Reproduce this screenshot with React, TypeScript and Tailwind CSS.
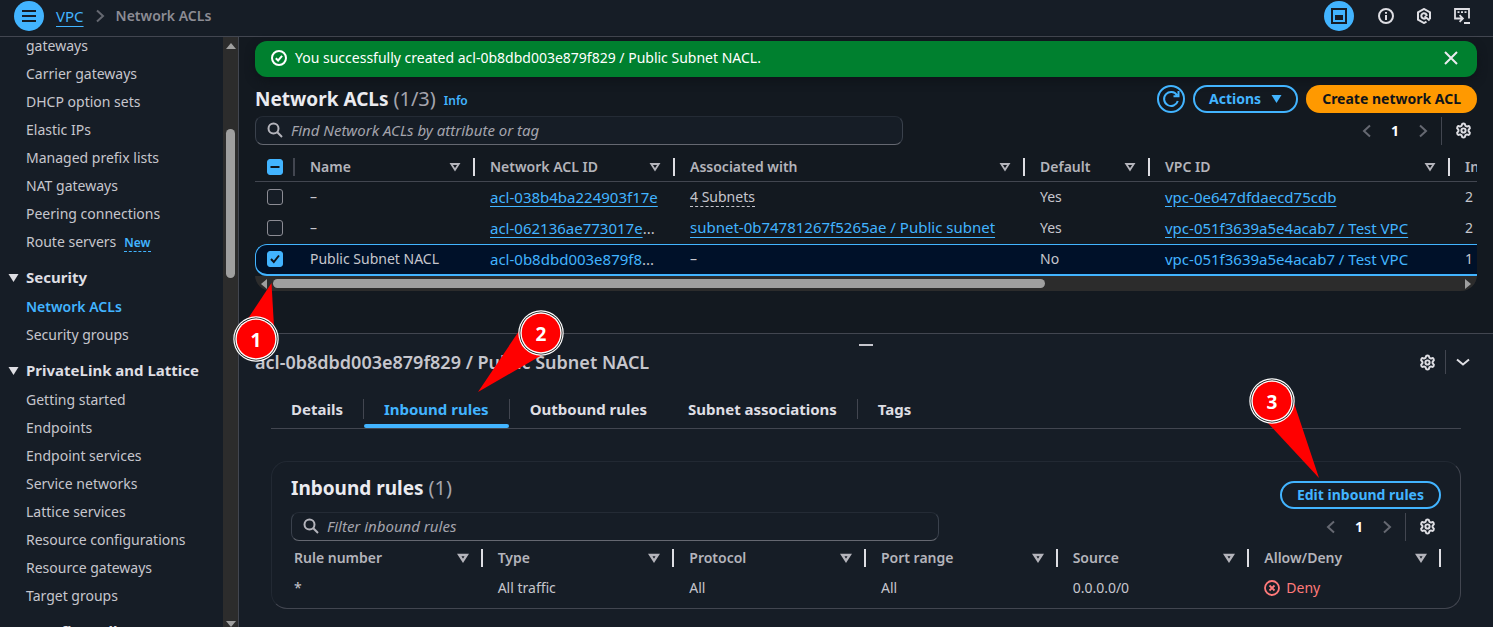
import type { ReactNode } from "react";
import { Settings } from "lucide-react";

type NavGroup = { title?: string; items: string[] };

const navGroups: NavGroup[] = [
  {
    items: [
      "gateways",
      "Carrier gateways",
      "DHCP option sets",
      "Elastic IPs",
      "Managed prefix lists",
      "NAT gateways",
      "Peering connections",
      "Route servers",
    ],
  },
  { title: "Security", items: ["Network ACLs", "Security groups"] },
  {
    title: "PrivateLink and Lattice",
    items: [
      "Getting started",
      "Endpoints",
      "Endpoint services",
      "Service networks",
      "Lattice services",
      "Resource configurations",
      "Resource gateways",
      "Target groups",
    ],
  },
  { title: "DNS firewall", items: [] },
];

const acls = [
  { name: "–", id: "acl-038b4ba224903f17e", cut: false, assoc: "4 Subnets", kind: "popover", def: "Yes", vpc: "vpc-0e647dfdaecd75cdb", count: "2", selected: false },
  { name: "–", id: "acl-062136ae773017e", cut: true, assoc: "subnet-0b74781267f5265ae / Public subnet", kind: "link", def: "Yes", vpc: "vpc-051f3639a5e4acab7 / Test VPC", count: "2", selected: false },
  { name: "Public Subnet NACL", id: "acl-0b8dbd003e879f8", cut: true, assoc: "–", kind: "plain", def: "No", vpc: "vpc-051f3639a5e4acab7 / Test VPC", count: "1", selected: true },
];

function Chevron({ d, className }: { d: string; className: string }) {
  return (
    <svg viewBox="0 0 16 16" className={`size-4 ${className}`} fill="none" stroke="currentColor" strokeWidth="2" aria-hidden="true">
      <path d={d} />
    </svg>
  );
}

const LEFT = "M11 2.5 5 8l6 5.5";
const RIGHT = "m5 2.5 6 5.5-6 5.5";

function Gear({ label }: { label: string }) {
  return (
    <button aria-label={label} className="flex text-[#dedee3]">
      <Settings size={17} strokeWidth={2.8} />
    </button>
  );
}

function Pager() {
  return (
    <div className="flex items-center pr-[5px]">
      <button aria-label="Previous page" className="flex">
        <Chevron d={LEFT} className="text-[#656871]" />
      </button>
      <button className="w-10 text-center font-bold text-white">1</button>
      <button aria-label="Next page" className="flex">
        <Chevron d={RIGHT} className="text-[#656871]" />
      </button>
      <span className="mr-[13px] ml-2.5 h-7 w-px bg-[#424650]" />
      <Gear label="Preferences" />
    </div>
  );
}

function Search({ placeholder }: { placeholder: string }) {
  return (
    <label className="flex h-[29px] w-[648px] items-center gap-2 rounded-lg border border-[#3a414c] border-t-[#242b35] border-b-[#656871] bg-[#161d26] px-[11px] pb-0.5">
      <svg viewBox="0 0 16 16" className="size-4 shrink-0 text-[#b4b4bb]" fill="none" stroke="currentColor" strokeWidth="2" aria-hidden="true">
        <circle cx="6.5" cy="6.5" r="5" />
        <path d="m10.3 10.3 4.7 4.7" />
      </svg>
      <input
        type="text"
        aria-label={placeholder}
        placeholder={placeholder}
        className="min-w-0 flex-1 bg-transparent text-[15px] italic outline-none placeholder:text-[#a4a4ad]"
      />
    </label>
  );
}

function HeadCell({ children, first, filled }: { children: ReactNode; first?: boolean; filled?: boolean }) {
  return (
    <th className="p-0 text-left font-semibold text-[#b4b4bb]">
      <div className={`flex items-center justify-between ${first ? "pl-[3px]" : "pl-[15px]"}`}>
        {children}
        <span className="flex items-center gap-3">
          <svg viewBox="0 0 12 12" className="size-3" fill="none" stroke="currentColor" strokeWidth={filled ? "2.4" : "1.8"} aria-hidden="true">
            <path d="M2.2 3h7.6L6 8.8Z" />
          </svg>
          <span className="h-[18px] w-0.5 bg-[#dedee3]" />
        </span>
      </div>
    </th>
  );
}

function Check({ checked, mixed, label }: { checked?: boolean; mixed?: boolean; label: string }) {
  const on = checked || mixed;
  return (
    <label className={`grid size-4 place-items-center ${checked ? "ml-[11px]" : "ml-3"}`}>
      <input
        type="checkbox"
        aria-label={label}
        defaultChecked={on}
        className={`col-start-1 row-start-1 size-4 appearance-none rounded-[3px] border ${on ? "border-[#42b4ff] bg-[#42b4ff]" : "border-[#8c8c94] bg-[#161d26]"}`}
      />
      {on && (
        <svg viewBox="0 0 16 16" className="pointer-events-none col-start-1 row-start-1 size-4" fill="none" stroke="#0f141a" strokeWidth="2" aria-hidden="true">
          <path d={mixed ? "M3.5 8h9" : "m4 8 2.8 3L12 4.5"} />
        </svg>
      )}
    </label>
  );
}

function Callout({ n, className, points, cx, cy, w, h }: { n: string; className: string; points: string; cx: number; cy: number; w: number; h: number }) {
  return (
    <svg width={w} height={h} viewBox={`0 0 ${w} ${h}`} className={`pointer-events-none absolute ${className}`} role="img" aria-label={`Step ${n}`}>
      <polygon points={points} fill="#ff0000" />
      <circle cx={cx} cy={cy} r="22.7" fill="#ffffff" />
      <circle cx={cx} cy={cy} r="21.5" fill="#111111" />
      <circle cx={cx} cy={cy} r="20.7" fill="#ffffff" />
      <circle cx={cx} cy={cy} r="19.3" fill="#ff0000" />
      <text x={cx} y={cy + 8} textAnchor="middle" fill="#ffffff" fontSize="19" fontWeight="700" fontFamily="'Open Sans', sans-serif">
        {n}
      </text>
    </svg>
  );
}

function TopBar() {
  return (
    <header className="flex h-[37px] shrink-0 items-center border-b border-[#424650] bg-[#161d26] pr-[23px] pb-1 pl-3.5">
      <button aria-label="Open navigation" className="flex size-[30px] items-center justify-center rounded-full bg-[#42b4ff]">
        <svg viewBox="0 0 16 16" className="size-4" fill="none" stroke="#161d26" strokeWidth="2" aria-hidden="true">
          <path d="M1 3h14M1 8h14M1 13h14" />
        </svg>
      </button>
      <nav aria-label="Breadcrumbs" className="ml-3 flex items-center gap-2">
        <a href="#vpc" className="text-[15px] text-[#42b4ff] underline underline-offset-4">VPC</a>
        <Chevron d={RIGHT} className="text-[#656871]" />
        <span className="font-semibold text-[#8c8c94]">Network ACLs</span>
      </nav>
      <div className="ml-auto flex items-center gap-[22px] text-[#dedee3]">
        <button aria-label="Split panel" className="mr-0.5 flex size-[30px] items-center justify-center rounded-full bg-[#42b4ff]">
          <svg viewBox="0 0 16 16" className="size-4" fill="none" stroke="#161d26" strokeWidth="2" aria-hidden="true">
            <path d="M1 1h14v14H1z" />
            <path d="M4 7h8v5H4z" fill="#161d26" stroke="none" />
          </svg>
        </button>
        <button aria-label="Info" className="flex">
          <svg viewBox="0 0 16 16" className="size-4" fill="none" stroke="currentColor" strokeWidth="2" aria-hidden="true">
            <circle cx="8" cy="8" r="7" />
            <path d="M8 7v5M8 4v1.8" />
          </svg>
        </button>
        <button aria-label="Amazon Q" className="flex">
          <svg viewBox="0 0 16 16" className="size-4" fill="none" stroke="currentColor" strokeWidth="2" aria-hidden="true">
            <path d="M10.5 13.6 8 15 2 11.6V4.4L8 1l6 3.4v6.8" />
            <path d="M9.6 10.1A2.7 2.7 0 1 1 10.7 8M8.6 8.2l5 4.3" />
          </svg>
        </button>
        <button aria-label="CloudShell" className="flex">
          <svg viewBox="0 0 16 16" className="size-4" fill="none" stroke="currentColor" strokeWidth="1.8" aria-hidden="true">
            <path d="M15 10.5V1H1v9.5h2M3.5 4.2h2M7 4.2h2M10.5 4.2h2" />
            <path d="M3 10.5h5.5M5.6 7.2l3.3 3.3-3.3 3.3M10 15h6" />
          </svg>
        </button>
      </div>
    </header>
  );
}

function Sidebar() {
  return (
    <aside className="flex w-[239px] shrink-0 overflow-hidden border-r border-[#424650] bg-[#161d26]">
      <nav aria-label="VPC" className="-mt-px flex flex-1 flex-col gap-[15px]">
        {navGroups.map((g, i) => (
          <div key={i}>
            {g.title && (
              <button className="mb-[9px] flex items-center gap-[7px] pl-2 text-[15px] leading-[21px] font-bold text-[#dedee3]">
                <svg viewBox="0 0 10 8" className="h-2 w-[11px]" fill="currentColor" aria-hidden="true">
                  <path d="M0 0h10L5 8Z" />
                </svg>
                {g.title}
              </button>
            )}
            <ul className="flex flex-col gap-2 pl-[26px] leading-5 text-[#c6c6cd]">
              {g.items.map((item) => (
                <li key={item} className="flex h-5 items-center gap-2">
                  <a href="#nav" className={item === "Network ACLs" ? "font-semibold text-[#42b4ff]" : ""}>{item}</a>
                  {item === "Route servers" && (
                    <button className="mt-0.5 border-b border-dashed border-[#42b4ff] text-xs leading-4 font-semibold text-[#42b4ff]">New</button>
                  )}
                </li>
              ))}
            </ul>
          </div>
        ))}
      </nav>
      <div className="flex w-[15px] flex-col items-center bg-[#2c2c2c] pt-1.5">
        <svg viewBox="0 0 10 6" className="h-1.5 w-2.5" fill="#9f9f9f" aria-hidden="true"><path d="M0 6h10L5 0Z" /></svg>
        <div className="mt-20 h-[149px] w-[9px] rounded-full bg-[#9f9f9f]" />
        <svg viewBox="0 0 10 6" className="mt-auto h-1.5 w-2.5" fill="#9f9f9f" aria-hidden="true"><path d="M0 0h10L5 6Z" /></svg>
      </div>
    </aside>
  );
}

function AclTable() {
  return (
    <div className="mt-2 overflow-hidden rounded-b-2xl">
      <table className="w-[1950px] table-fixed border-separate border-spacing-0 text-[#c6c6cd]">
        <colgroup>
          <col className="w-10" />
          <col className="w-[180px]" />
          <col className="w-[200px]" />
          <col className="w-[350px]" />
          <col className="w-[125px]" />
          <col className="w-[300px]" />
          <col />
        </colgroup>
        <thead>
          <tr className="h-[29px] [&>th]:border-b [&>th]:border-[#424650]">
            <th className="p-0">
              <div className="flex items-center justify-between">
                <Check mixed label="Select all" />
                <span className="h-[18px] w-0.5 bg-[#424650]" />
              </div>
            </th>
            <HeadCell>Name</HeadCell>
            <HeadCell>Network ACL ID</HeadCell>
            <HeadCell>Associated with</HeadCell>
            <HeadCell>Default</HeadCell>
            <HeadCell>VPC ID</HeadCell>
            <HeadCell>Inbound rules count</HeadCell>
          </tr>
        </thead>
        <tbody>
          {acls.map((a, i) => (
            <tr
              key={i}
              className={
                a.selected
                  ? "h-8 [&>td]:border-t [&>td]:border-b-2 [&>td]:border-[#42b4ff] [&>td]:bg-[#001129] [&>td:first-child]:rounded-l-xl [&>td:first-child]:border-l"
                  : "h-[31px]"
              }
            >
              <td className="p-0 pb-0.5"><Check checked={a.selected} label={`Select ${a.id}`} /></td>
              <td className="p-0 pb-0.5 pl-[15px]">{a.name}</td>
              <td className="p-0 pb-0.5 pl-[15px] text-[15px]">
                <a href="#acl" className={`text-[#42b4ff] ${a.selected ? "" : "underline underline-offset-3"}`}>{a.id}</a>
                {a.cut && "..."}
              </td>
              <td className="p-0 pb-0.5 pl-[15px]">
                {a.kind === "link" && <a href="#subnet" className="text-[15px] text-[#42b4ff] underline underline-offset-4">{a.assoc}</a>}
                {a.kind === "popover" && <button className="border-b border-dashed border-[#c6c6cd] leading-[18px]">{a.assoc}</button>}
                {a.kind === "plain" && a.assoc}
              </td>
              <td className="p-0 pb-0.5 pl-[15px]">{a.def}</td>
              <td className="p-0 pb-0.5 pl-[15px] text-[15px]">
                <a href="#vpc" className={`text-[#42b4ff] ${a.selected ? "" : "underline underline-offset-3"}`}>{a.vpc}</a>
              </td>
              <td className="p-0 pb-0.5 pl-[15px]">{a.count}</td>
            </tr>
          ))}
        </tbody>
      </table>
      <div className="flex h-[15px] items-center gap-1 bg-[#2c2c2c] px-1.5">
        <svg viewBox="0 0 6 10" className="h-2.5 w-1.5" fill="#9f9f9f" aria-hidden="true"><path d="M6 0v10L0 5Z" /></svg>
        <div className="flex-1 pl-0.5">
          <div className="h-[9px] w-[65%] rounded-full bg-[#9f9f9f]" />
        </div>
        <svg viewBox="0 0 6 10" className="h-2.5 w-1.5" fill="#9f9f9f" aria-hidden="true"><path d="M0 0v10l6-5Z" /></svg>
      </div>
    </div>
  );
}

function AclList() {
  return (
    <section className="min-h-0 flex-1 bg-[#131920] px-4 pt-1">
      <div role="status" className="flex h-9 items-center gap-2 rounded-xl bg-[#00802f] pr-[18px] pb-0.5 pl-4 text-white shadow-[0_4px_10px_#0f141a]">
        <svg viewBox="0 0 16 16" className="size-4" fill="none" stroke="currentColor" strokeWidth="2" aria-hidden="true">
          <circle cx="8" cy="8" r="7" />
          <path d="m4.8 8.2 2.3 2.3 4-4.6" />
        </svg>
        You successfully created acl-0b8dbd003e879f829 / Public Subnet NACL.
        <button aria-label="Dismiss" className="ml-auto flex">
          <svg viewBox="0 0 16 16" className="size-4" fill="none" stroke="#ebebf0" strokeWidth="2" aria-hidden="true">
            <path d="m2 2 12 12M14 2 2 14" />
          </svg>
        </button>
      </div>
      <div className="mt-2 flex h-7 items-center gap-2">
        <h1 className="text-[19px] leading-[26px] font-bold text-[#ebebf0]">
          Network ACLs <span className="text-xl leading-[26px] font-normal text-[#a4a4ad]">(1/3)</span>
        </h1>
        <a href="#info" className="pt-1 text-xs font-semibold text-[#42b4ff]">Info</a>
        <button aria-label="Refresh" className="ml-auto flex size-7 items-center justify-center rounded-full border-2 border-[#42b4ff] text-[#42b4ff]">
          <svg viewBox="0 0 18 18" className="size-[18px] shrink-0" fill="none" stroke="currentColor" strokeWidth="2" aria-hidden="true">
            <path d="M15.8 11A7 7 0 1 1 15 5.2M16.5 1v5.2h-5" />
          </svg>
        </button>
        <button className="flex h-7 items-center gap-2.5 rounded-full border-2 border-[#42b4ff] px-3.5 font-bold text-[#42b4ff]">
          Actions
          <svg viewBox="0 0 10 8" className="h-2 w-[11px]" fill="currentColor" aria-hidden="true"><path d="M0 0h10L5 8Z" /></svg>
        </button>
        <button className="h-7 rounded-full bg-[#ff9900] px-4 font-bold text-[#0f141a]">Create network ACL</button>
      </div>
      <div className="mt-[3px] flex items-center justify-between">
        <Search placeholder="Find Network ACLs by attribute or tag" />
        <Pager />
      </div>
      <AclTable />
    </section>
  );
}

const tabs = [
  { label: "Details", divider: true },
  { label: "Inbound rules", divider: true },
  { label: "Outbound rules", divider: false },
  { label: "Subnet associations", divider: true },
  { label: "Tags", divider: false },
];

function SplitPanel() {
  return (
    <section className="relative shrink-0 border-t border-[#424650] bg-[#161d26] pb-[18px]">
      <div className="flex justify-center pt-2.5">
        <span className="h-0.5 w-3.5 bg-[#c6c6cd]" />
      </div>
      <div className="flex h-8 items-center pr-[22px] pl-4">
        <h2 className="text-lg leading-7 font-semibold text-[#c6c6cd]">acl-0b8dbd003e879f829 / Public Subnet NACL</h2>
        <div className="ml-auto flex items-center">
          <Gear label="Panel preferences" />
          <span className="mx-[9px] h-6 w-px bg-[#424650]" />
          <button aria-label="Collapse panel" className="flex">
            <Chevron d="m2 5.5 6 5 6-5" className="text-[#dedee3]" />
          </button>
        </div>
      </div>
      <div role="tablist" className="mx-8 mt-4 flex border-b border-[#424650]">
        {tabs.map((t, i) => (
          <button key={t.label} role="tab" aria-selected={i === 1} className={`text-[15px] font-bold ${i === 1 ? "text-[#42b4ff]" : "text-[#dedee3]"}`}>
            <span className="flex h-[30px] items-center">
              <span className="px-5">{t.label}</span>
              <span className={`h-5 w-px ${t.divider ? "bg-[#424650]" : ""}`} />
            </span>
            <span className={`mr-px block h-1 rounded-sm ${i === 1 ? "bg-[#42b4ff]" : ""}`} />
          </button>
        ))}
      </div>
      <div className="mx-8 mt-8 rounded-2xl border border-[#424650] border-t-[#222933] border-l-[#222933] px-[19px] pt-[13px] pb-1">
        <div className="flex h-[34px] items-start justify-between">
          <h3 className="text-[19px] leading-[26px] font-bold text-[#ebebf0]">
            Inbound rules <span className="text-xl leading-[26px] font-normal text-[#a4a4ad]">(1)</span>
          </h3>
          <button className="h-7 self-end rounded-full border-2 border-[#42b4ff] px-[15px] leading-5 font-bold text-[#42b4ff]">Edit inbound rules</button>
        </div>
        <div className="mt-[3px] flex items-center justify-between">
          <Search placeholder="Filter inbound rules" />
          <Pager />
        </div>
        <table className="mt-[3px] w-full table-fixed text-[#c6c6cd]">
          <thead>
            <tr className="h-[27px]">
              <HeadCell first filled>Rule number</HeadCell>
              <HeadCell filled>Type</HeadCell>
              <HeadCell filled>Protocol</HeadCell>
              <HeadCell filled>Port range</HeadCell>
              <HeadCell filled>Source</HeadCell>
              <HeadCell filled>Allow/Deny</HeadCell>
            </tr>
          </thead>
          <tbody>
            <tr className="h-[33px]">
              <td className="p-0 pl-[3px]">*</td>
              <td className="p-0 pl-[15px]">All traffic</td>
              <td className="p-0 pl-[15px]">All</td>
              <td className="p-0 pl-[15px]">All</td>
              <td className="p-0 pl-[15px]">0.0.0.0/0</td>
              <td className="p-0 pl-[15px]">
                <span className="flex items-center gap-1.5 text-[#ff7a7a]">
                  <svg viewBox="0 0 16 16" className="size-4" fill="none" stroke="currentColor" strokeWidth="1.8" aria-hidden="true">
                    <circle cx="8" cy="8" r="7" />
                    <path d="m5.5 5.5 5 5M10.5 5.5l-5 5" />
                  </svg>
                  Deny
                </span>
              </td>
            </tr>
          </tbody>
        </table>
      </div>
      <Callout n="1" className="-top-[51px] -left-[7px]" w={48} h={80} cx={24} cy={56} points="39.5,0 15,37 42,44" />
      <Callout n="2" className="-top-[24px] left-[239px]" w={86} h={84} cx={63} cy={23} points="0,82 41,21 64,45" />
      <Callout n="3" className="top-[43px] right-[172px]" w={72} h={102} cx={23} cy={24} points="70,101 18,45 45,26" />
    </section>
  );
}

export default function App() {
  return (
    <div className="flex h-screen flex-col overflow-hidden bg-[#161d26] font-['Noto_Sans','Open_Sans',sans-serif] text-sm leading-5">
      <TopBar />
      <div className="flex min-h-0 flex-1">
        <Sidebar />
        <main className="flex min-w-0 flex-1 flex-col">
          <AclList />
          <SplitPanel />
        </main>
      </div>
    </div>
  );
}
